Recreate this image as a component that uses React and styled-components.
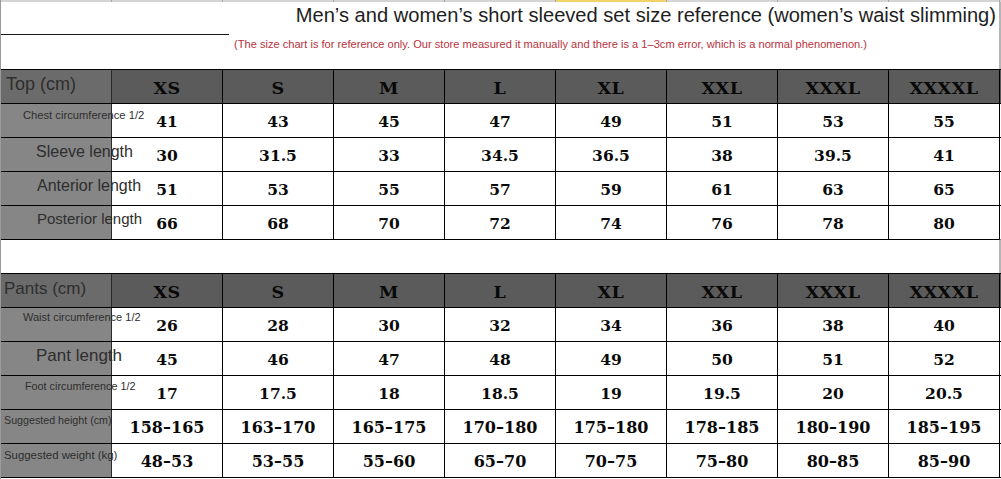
import React from "react";
import styled, { createGlobalStyle } from "styled-components";

const GlobalStyle = createGlobalStyle`
  html, body {
    margin: 0;
    padding: 0;
    background: #ffffff;
  }
`;

const sizes = ["XS", "S", "M", "L", "XL", "XXL", "XXXL", "XXXXL"];

const topRows = [
  { label: "Chest circumference 1/2", size: 11.2, left: 22, top: 5, values: ["41", "43", "45", "47", "49", "51", "53", "55"] },
  { label: "Sleeve length", size: 16, left: 35, top: 5, values: ["30", "31.5", "33", "34.5", "36.5", "38", "39.5", "41"] },
  { label: "Anterior length", size: 16, left: 36, top: 5, values: ["51", "53", "55", "57", "59", "61", "63", "65"] },
  { label: "Posterior length", size: 15, left: 36, top: 4, values: ["66", "68", "70", "72", "74", "76", "78", "80"] },
];

const pantRows = [
  { label: "Waist circumference 1/2", size: 11, left: 22, top: 3, values: ["26", "28", "30", "32", "34", "36", "38", "40"] },
  { label: "Pant length", size: 17, left: 35, top: 4, values: ["45", "46", "47", "48", "49", "50", "51", "52"] },
  { label: "Foot circumference 1/2", size: 10.8, left: 24, top: 4, values: ["17", "17.5", "18", "18.5", "19", "19.5", "20", "20.5"] },
  { label: "Suggested height (cm)", size: 10.7, left: 3, top: 4, wide: true, values: ["158–165", "163–170", "165–175", "170–180", "175–180", "178–185", "180–190", "185–195"] },
  { label: "Suggested weight (kg)", size: 11.4, left: 3, top: 5, wide: true, values: ["48–53", "53–55", "55–60", "65–70", "70–75", "75–80", "80–85", "85–90"] },
];

export default function App() {
  return (
    <>
      <GlobalStyle />
      <Page>
        <TopStrip>
          {Array.from({ length: 9 }).map((_, i) => (
            <Tick key={i} $yellow={i === 5} />
          ))}
        </TopStrip>
        <TitleBar>
          <TitleRule />
          <Title>Men’s and women’s short sleeved set size reference (women’s waist slimming)</Title>
        </TitleBar>
        <NoteBar>
          <Note>
            (The size chart is for reference only. Our store measured it manually and there is a 1–3cm error, which is a normal phenomenon.)
          </Note>
        </NoteBar>

        <SizeTable title="Top (cm)" rows={topRows} titleSize={18} titleLeft={5} />
        <Spacer />
        <SizeTable title="Pants (cm)" rows={pantRows} titleSize={17} titleLeft={3} last />
      </Page>
    </>
  );
}

function SizeTable({ title, rows, titleSize, titleLeft, last }) {
  return (
    <Table $last={last}>
      <Row $head>
        <HeadLabel>
          <LabelText $size={titleSize} $left={titleLeft} $head>
            {title}
          </LabelText>
        </HeadLabel>
        {sizes.map((s) => (
          <Cell key={s}>
            <HeadValue>{s}</HeadValue>
          </Cell>
        ))}
      </Row>
      {rows.map((r) => (
        <Row key={r.label}>
          <Label $top={r.top}>
            <LabelText $size={r.size} $left={r.left}>
              {r.label}
            </LabelText>
          </Label>
          {r.values.map((v, i) => (
            <Cell key={i} $white>
              <Value $wide={r.wide}>{v}</Value>
            </Cell>
          ))}
        </Row>
      ))}
    </Table>
  );
}

const Page = styled.div`
  width: 1001px;
  height: 479px;
  display: flex;
  flex-direction: column;
  border-left: 1px solid #9a9a9a;
  box-sizing: border-box;
  overflow: hidden;
  background: #ffffff;
`;

const TopStrip = styled.div`
  height: 2px;
  display: grid;
  grid-template-columns: repeat(9, 111px);
  background: #d4d4d4;
`;

const Tick = styled.div`
  border-right: 1px solid #a8a8a8;
  background: ${(p) => (p.$yellow ? "#f2d36a" : "transparent")};
`;

const TitleBar = styled.div`
  height: 33px;
  display: flex;
  align-items: flex-end;
  justify-content: space-between;
  border-right: 2px solid #b5b5b5;
  box-sizing: border-box;
`;

const TitleRule = styled.div`
  width: 228px;
  height: 1px;
  background: #1a1a1a;
`;

const Title = styled.div`
  align-self: flex-start;
  padding: 1px 3px 0 0;
  font-family: "Liberation Sans", Arial, sans-serif;
  font-size: 20.1px;
  line-height: 25px;
  color: #1e1e1e;
  white-space: nowrap;
`;

const NoteBar = styled.div`
  height: 34px;
  display: flex;
  align-items: flex-start;
  padding-left: 233px;
  border-right: 2px solid #b5b5b5;
  box-sizing: border-box;
`;

const Note = styled.div`
  padding-top: 2px;
  font-family: "Liberation Sans", Arial, sans-serif;
  font-size: 11.1px;
  line-height: 14px;
  color: #b8323c;
  white-space: nowrap;
`;

const Table = styled.div`
  display: flex;
  flex-direction: column;
  border-bottom: ${(p) => (p.$last ? "1px solid #000" : "none")};
`;

const Row = styled.div`
  height: 34px;
  box-sizing: border-box;
  display: grid;
  grid-template-columns: repeat(9, 111px);
  border-top: 1px solid #000;
  background: ${(p) => (p.$head ? "#5b5b5b" : "#ffffff")};
`;

const Cell = styled.div`
  display: flex;
  align-items: center;
  justify-content: center;
  border-right: 1px solid #000;
  background: ${(p) => (p.$white ? "#ffffff" : "transparent")};
`;

const HeadLabel = styled.div`
  display: flex;
  align-items: center;
  background: #6b6b6b;
  border-right: 1px solid #2a2a2a;
`;

const Label = styled.div`
  display: flex;
  align-items: flex-start;
  padding-top: ${(p) => p.$top}px;
  box-sizing: border-box;
  background: #868686;
  border-right: 1px solid #2a2a2a;
`;

const LabelText = styled.span`
  position: relative;
  z-index: 2;
  margin-left: ${(p) => p.$left}px;
  margin-top: ${(p) => (p.$head ? "-4px" : "0")};
  font-family: "Liberation Sans", Arial, sans-serif;
  font-size: ${(p) => p.$size}px;
  line-height: ${(p) => Math.round(p.$size * 1.15)}px;
  color: #2e2e2e;
  white-space: nowrap;
`;

const Value = styled.span`
  font-family: "DejaVu Serif", "Liberation Serif", serif;
  font-weight: 700;
  font-size: ${(p) => (p.$wide ? "16px" : "15.5px")};
  color: #0a0a0a;
  padding-top: 2px;
`;

const HeadValue = styled.span`
  font-family: "DejaVu Serif", "Liberation Serif", serif;
  font-weight: 700;
  font-size: 17.5px;
  letter-spacing: 0.5px;
  color: #080808;
  padding-top: 2px;
`;

const Spacer = styled.div`
  height: 34px;
  border-top: 1px solid #000;
  border-right: 2px solid #b5b5b5;
  box-sizing: border-box;
`;
